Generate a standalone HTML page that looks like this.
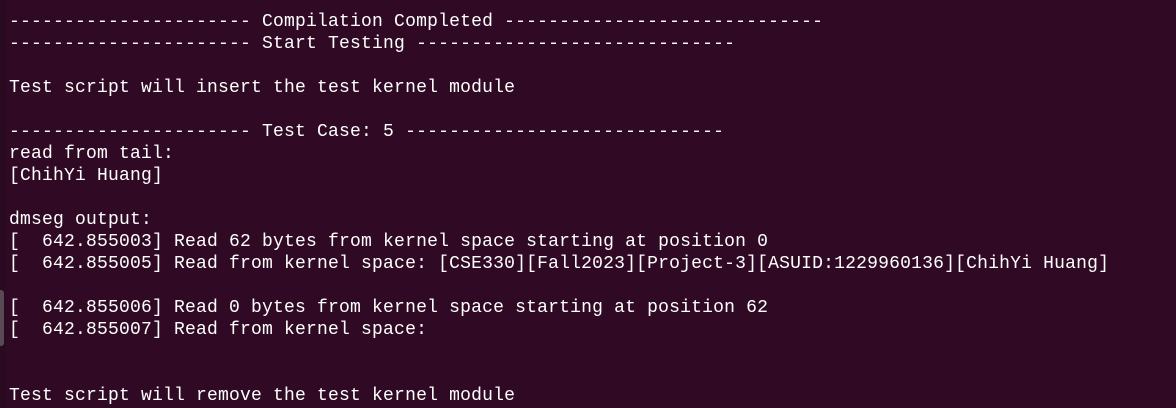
<!DOCTYPE html>
<html><head><meta charset="utf-8"><style>
html,body{margin:0;padding:0;background:#300a24;width:1176px;height:408px;overflow:hidden}
.strip{position:absolute;left:0;top:0;width:6px;height:408px;background:#2a0a20}
.thumb{position:absolute;left:0;top:290px;width:4px;height:56px;background:#5a4a55;border-radius:0 3px 3px 0}
pre{position:absolute;left:9px;top:11px;margin:0;font-family:"Liberation Mono","DejaVu Sans Mono",monospace;font-size:18px;letter-spacing:0.2px;line-height:22px;color:#ffffff;white-space:pre}
</style></head><body>
<div class="strip"></div><div class="thumb"></div>
<pre>---------------------- Compilation Completed -----------------------------
---------------------- Start Testing -----------------------------

Test script will insert the test kernel module

---------------------- Test Case: 5 -----------------------------
read from tail:
[ChihYi Huang]

dmseg output:
[  642.855003] Read 62 bytes from kernel space starting at position 0
[  642.855005] Read from kernel space: [CSE330][Fall2023][Project-3][ASUID:1229960136][ChihYi Huang]

[  642.855006] Read 0 bytes from kernel space starting at position 62
[  642.855007] Read from kernel space:


Test script will remove the test kernel module</pre>
</body></html>
